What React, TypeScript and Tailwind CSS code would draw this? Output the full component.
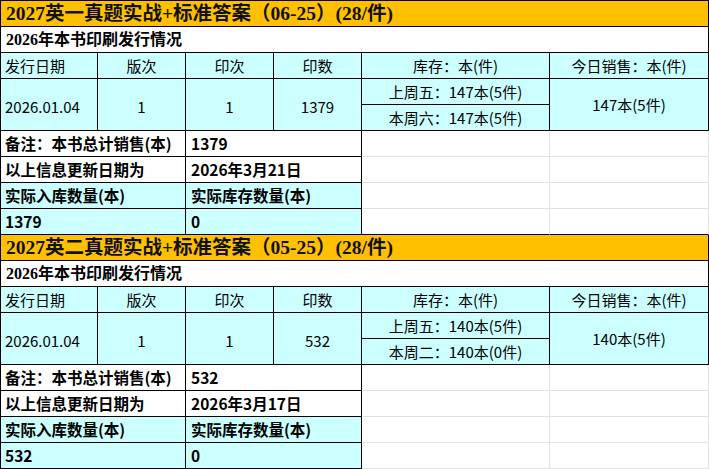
import React from 'react';

interface BookData {
  title: string;
  edition: string;
  printing: string;
  printCount: string;
  stockA: string;
  stockB: string;
  todaySales: string;
  totalSales: string;
  updated: string;
  received: string;
  inStock: string;
  lastRow?: boolean;
}

const books: BookData[] = [
  {
    title: '2027英一真题实战+标准答案（06-25）(28/件)',
    edition: '1',
    printing: '1',
    printCount: '1379',
    stockA: '上周五：147本(5件)',
    stockB: '本周六：147本(5件)',
    todaySales: '147本(5件)',
    totalSales: '1379',
    updated: '2026年3月21日',
    received: '1379',
    inStock: '0',
  },
  {
    title: '2027英二真题实战+标准答案（05-25）(28/件)',
    edition: '1',
    printing: '1',
    printCount: '532',
    stockA: '上周五：140本(5件)',
    stockB: '本周二：140本(0件)',
    todaySales: '140本(5件)',
    totalSales: '532',
    updated: '2026年3月17日',
    received: '532',
    inStock: '0',
    lastRow: true,
  },
];

const cell = 'border-r border-b border-black flex items-center';
const cyan = 'bg-[#ccffff]';
const boldText = "font-bold text-[15.5px] font-['Noto_Sans_CJK_SC',sans-serif]";
const plainText = "text-[15px] font-['Noto_Sans_CJK_SC',sans-serif]";

const BookBlock: React.FC<{ book: BookData }> = ({ book }) => {
  const emptyBottom = book.lastRow ? 'border-b-[#e2e2e2]' : 'border-b-black';
  const empty = `border-r border-b border-r-[#e2e2e2] bg-white ${emptyBottom}`;
  const emptyMid = 'border-r border-b border-[#e2e2e2] bg-white';
  return (
    <>
      <div className={`${cell} col-span-6 bg-[#ffc000] pl-[5px] font-bold text-[19.5px] font-['Liberation_Serif','Noto_Sans_CJK_SC',serif] text-[#111]`}>
        {book.title}
      </div>
      <div className={`${cell} col-span-6 bg-white pl-[5px] font-bold text-[15.5px] font-['Liberation_Serif','Noto_Sans_CJK_SC',serif] text-[16px]`}>
        2026年本书印刷发行情况
      </div>

      <div className={`${cell} ${cyan} ${plainText} pl-[4px]`}>发行日期</div>
      <div className={`${cell} ${cyan} ${plainText} justify-center`}>版次</div>
      <div className={`${cell} ${cyan} ${plainText} justify-center`}>印次</div>
      <div className={`${cell} ${cyan} ${plainText} justify-center`}>印数</div>
      <div className={`${cell} ${cyan} ${plainText} justify-center`}>库存：本(件)</div>
      <div className={`${cell} ${cyan} ${plainText} justify-center`}>今日销售：本(件)</div>

      <div className={`${cell} ${cyan} ${plainText} row-span-2 pl-[4px] pt-[3px]`}>2026.01.04</div>
      <div className={`${cell} ${cyan} ${plainText} row-span-2 justify-center pt-[3px]`}>{book.edition}</div>
      <div className={`${cell} ${cyan} ${plainText} row-span-2 justify-center pt-[3px]`}>{book.printing}</div>
      <div className={`${cell} ${cyan} ${plainText} row-span-2 justify-center pt-[3px]`}>{book.printCount}</div>
      <div className={`${cell} ${cyan} ${plainText} justify-center`}>{book.stockA}</div>
      <div className={`${cell} ${cyan} ${plainText} row-span-2 justify-center`}>{book.todaySales}</div>
      <div className={`${cell} ${cyan} ${plainText} col-start-5 justify-center`}>{book.stockB}</div>

      <div className={`${cell} col-span-2 bg-white pl-[4px] ${boldText}`}>备注：本书总计销售(本)</div>
      <div className={`${cell} col-span-2 bg-white pl-[5px] ${boldText}`}>{book.totalSales}</div>
      <div className={emptyMid} />
      <div className={emptyMid} />

      <div className={`${cell} col-span-2 bg-white pl-[4px] ${boldText}`}>以上信息更新日期为</div>
      <div className={`${cell} col-span-2 bg-white pl-[5px] ${boldText}`}>{book.updated}</div>
      <div className={emptyMid} />
      <div className={emptyMid} />

      <div className={`${cell} col-span-2 ${cyan} pl-[4px] ${boldText}`}>实际入库数量(本)</div>
      <div className={`${cell} col-span-2 ${cyan} pl-[5px] ${boldText}`}>实际库存数量(本)</div>
      <div className={emptyMid} />
      <div className={emptyMid} />

      <div className={`${cell} col-span-2 ${cyan} pl-[4px] ${boldText}`}>{book.received}</div>
      <div className={`${cell} col-span-2 ${cyan} pl-[5px] ${boldText}`}>{book.inStock}</div>
      <div className={empty} />
      <div className={empty} />
    </>
  );
};

export default function App() {
  return (
    <div className="w-[709px] h-[469px] bg-white overflow-hidden">
      <div className="grid grid-cols-[97px_88px_88px_88px_188px_159px] auto-rows-[26px] border-t border-l border-black text-black leading-none">
        {books.map((b) => (
          <BookBlock key={b.title} book={b} />
        ))}
      </div>
    </div>
  );
}
